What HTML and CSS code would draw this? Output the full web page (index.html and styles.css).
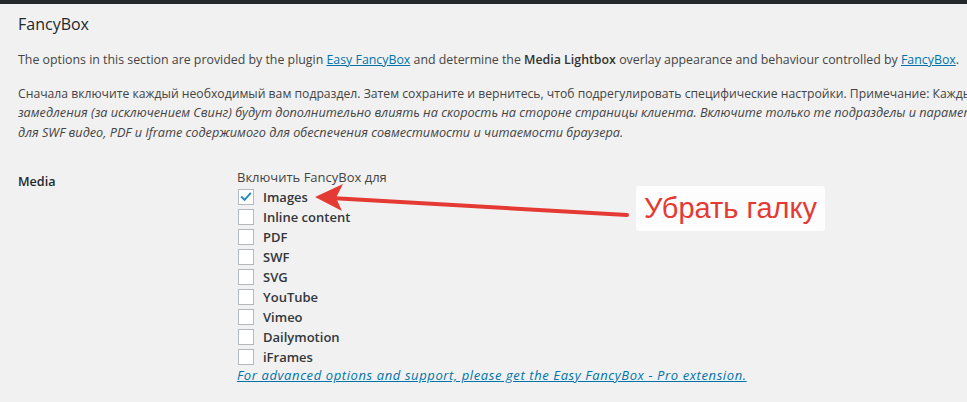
FILE: index.html
```html
<!DOCTYPE html>
<html lang="ru">
<head>
<meta charset="utf-8">
<title>FancyBox</title>
<link rel="stylesheet" href="styles.css">
</head>
<body>
<div class="topbar"></div>
<div class="wrap">
  <h2 class="title">FancyBox</h2>
  <p class="intro">The options in this section are provided by the plugin <a href="#">Easy FancyBox</a> and determine the <strong>Media Lightbox</strong> overlay appearance and behaviour controlled by <a href="#">FancyBox</a>.</p>
  <div class="note">
    <div class="line">Сначала включите каждый необходимый вам подраздел. Затем сохраните и вернитесь, чтоб подрегулировать специфические настройки. Примечание: Каждый подраздел, а также эффекты</div>
    <div class="line em">замедления (за исключением Свинг) будут дополнительно влиять на скорость на стороне страницы клиента. Включите только те подразделы и параметры, которые вам действительно нужны.</div>
    <div class="line em">для SWF видео, PDF и Iframe содержимого для обеспечения совместимости и читаемости браузера.</div>
  </div>
  <div class="row">
    <div class="label">Media</div>
    <div class="field">
      <div class="legend">Включить FancyBox для</div>
      <label class="opt"><span class="cb checked"><svg viewBox="0 0 16 16" width="16" height="16"><path d="M3.3 8.2 L6.4 11.3 L12.8 4.2" fill="none" stroke="#1e8cbe" stroke-width="2.2" stroke-linecap="square"/></svg></span>Images</label>
      <label class="opt"><span class="cb"></span>Inline content</label>
      <label class="opt"><span class="cb"></span>PDF</label>
      <label class="opt"><span class="cb"></span>SWF</label>
      <label class="opt"><span class="cb"></span>SVG</label>
      <label class="opt"><span class="cb"></span>YouTube</label>
      <label class="opt"><span class="cb"></span>Vimeo</label>
      <label class="opt"><span class="cb"></span>Dailymotion</label>
      <label class="opt"><span class="cb"></span>iFrames</label>
      <a class="pro" href="#">For advanced options and support, please get the Easy FancyBox - Pro extension.</a>
    </div>
  </div>
</div>
<svg class="arrow" width="967" height="402" viewBox="0 0 967 402">
  <path d="M627 215 L322 197.5" stroke="#e53a33" stroke-width="4" stroke-linecap="round" fill="none"/>
  <path d="M315 197 L343 184 L336 197.8 L342 211 Z" fill="#e53a33"/>
</svg>
<div class="callout">Убрать галку</div>
</body>
</html>
```
FILE: styles.css
```css
html, body {
  margin: 0;
  padding: 0;
}
body {
  background: #f1f1f1;
  font-family: "Open Sans", "Noto Sans", sans-serif;
  color: #444;
  font-size: 12.2px;
  width: 967px;
  height: 402px;
  overflow: hidden;
  position: relative;
}
.topbar {
  height: 4px;
  background: #23282d;
}
.wrap {
  padding: 0 0 0 18px;
}
.title {
  margin: 8px 0 0;
  font-size: 16px;
  font-weight: 400;
  color: #23282d;
  line-height: 24px;
}
.intro {
  margin: 14px 0 0;
  line-height: 19px;
  white-space: nowrap;
  font-size: 12.37px;
}
.intro a, .pro {
  color: #0073aa;
}
.intro strong {
  font-weight: 600;
  color: #333;
}
.note {
  margin-top: 15px;
}
.line {
  line-height: 19.3px;
  white-space: nowrap;
  overflow: hidden;
}
.em {
  font-style: italic;
  font-size: 12.7px;
}
.row {
  display: flex;
  margin-top: 25px;
}
.label {
  width: 219px;
  font-weight: 600;
  color: #23282d;
  font-size: 12.6px;
  padding-top: 5px;
  line-height: 20px;
}
.field {
  display: flex;
  flex-direction: column;
  align-items: flex-start;
}
.legend {
  line-height: 20px;
  font-size: 13px;
}
.opt {
  display: flex;
  align-items: center;
  height: 20px;
  font-weight: 600;
  color: #32373c;
  font-size: 13px;
}
.cb {
  width: 14px;
  height: 14px;
  border: 1px solid #b4b9be;
  background: #fff;
  margin: 0 9px 0 1px;
  display: flex;
  align-items: center;
  justify-content: center;
  box-sizing: content-box;
}
.cb svg {
  display: block;
  width: 14px;
  height: 14px;
}
.pro {
  font-style: italic;
  line-height: 16px;
  font-size: 13px;
  letter-spacing: 0.6px;
}
.arrow {
  position: absolute;
  left: 0;
  top: 0;
  pointer-events: none;
}
.callout {
  position: absolute;
  left: 636px;
  top: 186px;
  width: 189px;
  height: 45px;
  background: #fdfdfd;
  border-radius: 3px;
  color: #e53a33;
  font-family: "Liberation Sans", Arial, sans-serif;
  font-size: 29px;
  line-height: 45px;
  text-align: center;
}
```
